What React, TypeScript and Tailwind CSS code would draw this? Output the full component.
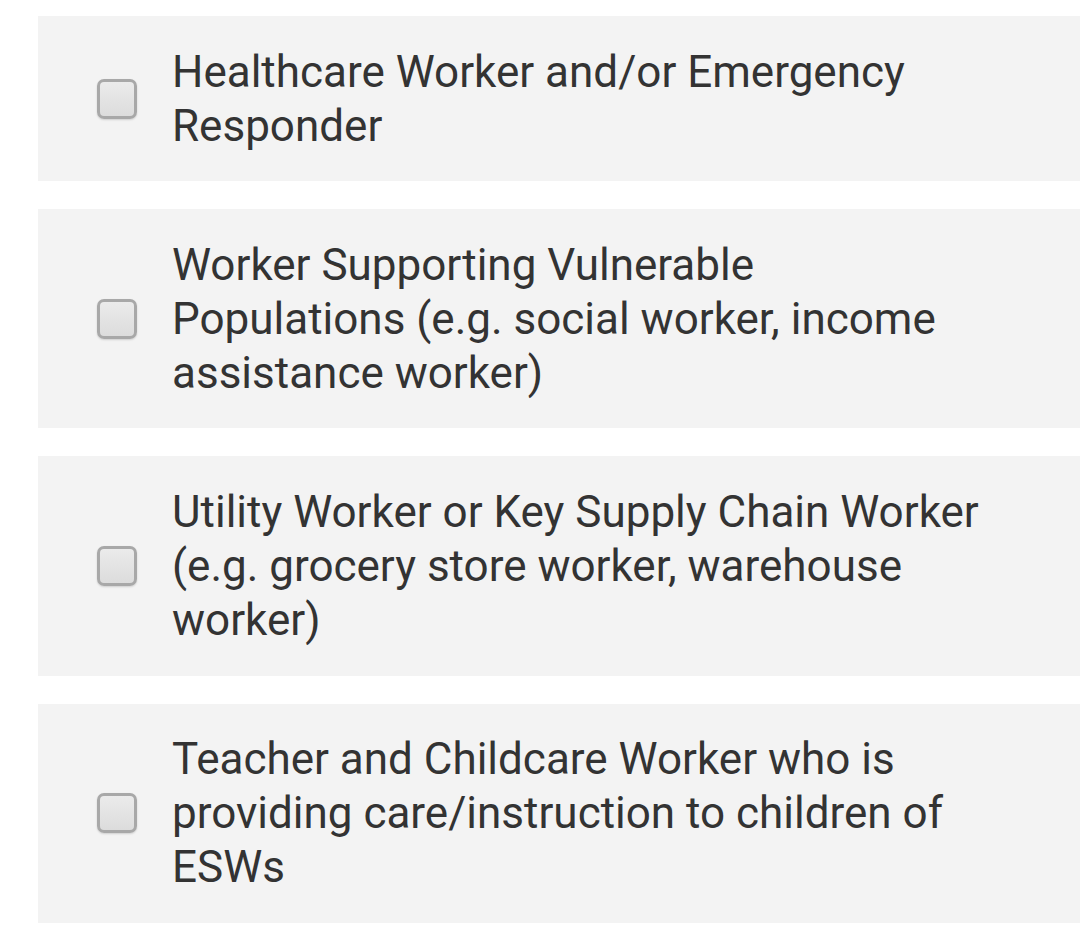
const options = [
  "Healthcare Worker and/or Emergency Responder",
  "Worker Supporting Vulnerable Populations (e.g. social worker, income assistance worker)",
  "Utility Worker or Key Supply Chain Worker (e.g. grocery store worker, warehouse worker)",
  "Teacher and Childcare Worker who is providing care/instruction to children of ESWs",
];

export default function App() {
  return (
    <div className="min-h-[946px] bg-white pt-4 pl-[38px]" style={{ fontFamily: "Roboto, 'Noto Sans', sans-serif" }}>
      <div className="flex flex-col gap-[28px]">
        {options.map((label) => (
          <label
            key={label}
            className="flex items-center bg-[#f3f3f3] py-[28.6px] pl-[59px]"
          >
            <span className="flex h-[40px] w-[40px] shrink-0 rounded-[7px] border-[3px] border-[#a8a8a8] bg-gradient-to-b from-[#ebebeb] to-[#dcdcdc] shadow-[0_1px_2px_rgba(0,0,0,0.15)]" />
            <span className="ml-[35px] w-[815px] text-[44px] leading-[54px] text-[#333333]">{label}</span>
          </label>
        ))}
      </div>
    </div>
  );
}
